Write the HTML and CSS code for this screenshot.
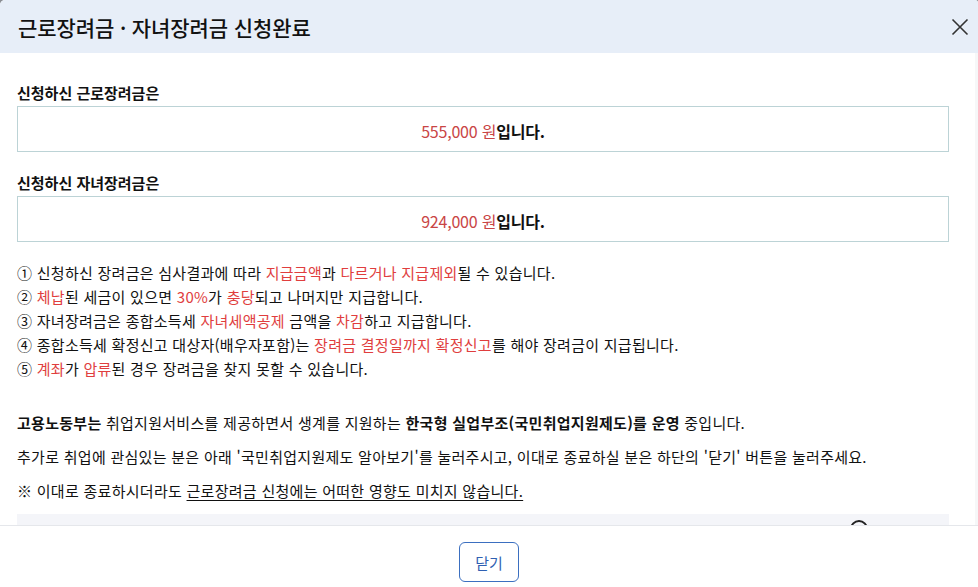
FILE: index.html
```html
<!DOCTYPE html>
<html lang="ko">
<head>
<meta charset="utf-8">
<title>근로장려금 · 자녀장려금 신청완료</title>
<link rel="stylesheet" href="styles.css">
</head>
<body>
<div class="modal">
  <header class="modal-head">
    <h1 class="modal-title">근로장려금 · 자녀장려금 신청완료</h1>
    <button class="close-btn" type="button" aria-label="닫기">
      <svg width="18" height="18" viewBox="0 0 18 18"><path d="M1.5 1.5 L16.5 16.5 M16.5 1.5 L1.5 16.5" stroke="#333" stroke-width="1.6" fill="none"/></svg>
    </button>
  </header>
  <main class="modal-body">
    <div class="content">
      <p class="label">신청하신 근로장려금은</p>
      <div class="amount-box"><span class="amount">555,000 원</span><strong>입니다.</strong></div>
      <p class="label second">신청하신 자녀장려금은</p>
      <div class="amount-box"><span class="amount">924,000 원</span><strong>입니다.</strong></div>

      <ul class="notes">
        <li>① 신청하신 장려금은 심사결과에 따라 <em>지급금액</em>과 <em>다르거나 지급제외</em>될 수 있습니다.</li>
        <li>② <em>체납</em>된 세금이 있으면 <em>30%</em>가 <em>충당</em>되고 나머지만 지급합니다.</li>
        <li>③ 자녀장려금은 종합소득세 <em>자녀세액공제</em> 금액을 <em>차감</em>하고 지급합니다.</li>
        <li>④ 종합소득세 확정신고 대상자(배우자포함)는 <em>장려금 결정일까지 확정신고</em>를 해야 장려금이 지급됩니다.</li>
        <li>⑤ <em>계좌</em>가 <em>압류</em>된 경우 장려금을 찾지 못할 수 있습니다.</li>
      </ul>

      <p class="para"><strong>고용노동부는</strong> 취업지원서비스를 제공하면서 생계를 지원하는 <strong>한국형 실업부조(국민취업지원제도)를 운영</strong> 중입니다.</p>
      <p class="para">추가로 취업에 관심있는 분은 아래 '국민취업지원제도 알아보기'를 눌러주시고, 이대로 종료하실 분은 하단의 '닫기' 버튼을 눌러주세요.</p>
      <p class="para">※ 이대로 종료하시더라도 <u>근로장려금 신청에는 어떠한 영향도 미치지 않습니다.</u></p>

      <div class="info-box"><span class="info-icon"></span></div>
    </div>
  </main>
  <footer class="modal-foot">
    <button class="btn-close" type="button">닫기</button>
  </footer>
</div>
</body>
</html>
```

FILE: styles.css
```css
html {
  background: #8a8d93;
}
body {
  margin: 0;
  font-family: "Noto Sans CJK KR", "Noto Sans", sans-serif;
  color: #111;
}
.modal {
  width: 978px;
  height: 587px;
  display: flex;
  flex-direction: column;
  background: #fff;
  border-radius: 5px 3px 0 0;
  overflow: hidden;
}
.modal-head {
  flex: 0 0 53px;
  background: #e7eef8;
  display: flex;
  align-items: center;
  justify-content: space-between;
  padding: 0 6px 0 18px;
}
.modal-title {
  margin: 0;
  font-size: 21px;
  font-weight: 500;
  letter-spacing: -0.1px;
  color: #111;
}
.close-btn {
  border: 0;
  background: none;
  padding: 0;
  width: 24px;
  height: 24px;
  display: flex;
  align-items: center;
  justify-content: center;
}
.modal-body {
  flex: 1;
  overflow: hidden;
  border-right: 3px solid #f6f7f8;
}
.content {
  padding: 30px 26px 0 17px;
  font-size: 15px;
}
.label {
  margin: 0 0 3px;
  line-height: 20px;
  font-weight: 700;
}
.label.second {
  margin-top: 21px;
}
.amount-box {
  border: 1px solid #bcd3d6;
  display: flex;
  align-items: center;
  justify-content: center;
  padding-top: 3px;
  box-sizing: border-box;
  height: 46px;
  font-size: 16px;
  letter-spacing: -0.2px;
}
.amount {
  color: #c94545;
}
.amount-box strong {
  font-weight: 700;
}
.notes {
  list-style: none;
  margin: 19px 0 30px;
  padding: 0;
  line-height: 24px;
  font-size: 15px;
  letter-spacing: 0.27px;
}
.notes em {
  font-style: normal;
  color: #e03e3e;
}
.para {
  margin: 0 0 10px;
  line-height: 24px;
  letter-spacing: 0.28px;
}
.para strong {
  font-weight: 700;
}
.para u {
  text-underline-offset: 3px;
}
.info-box {
  margin-top: 11px;
  height: 120px;
  background: #f4f5f9;
  position: relative;
}
.info-icon {
  position: absolute;
  left: 833px;
  top: 6px;
  width: 14px;
  height: 14px;
  border: 2px solid #222;
  border-radius: 50%;
}
.modal-foot {
  flex: 0 0 62px;
  border-top: 1px solid #e5e7eb;
  display: flex;
  justify-content: center;
  align-items: flex-start;
  padding-top: 16px;
  box-sizing: border-box;
}
.btn-close {
  width: 60px;
  height: 40px;
  border: 1px solid #3b6fc0;
  border-radius: 6px;
  background: #fff;
  color: #2f5fb2;
  font-family: inherit;
  font-size: 15px;
  padding: 0;
}
```
